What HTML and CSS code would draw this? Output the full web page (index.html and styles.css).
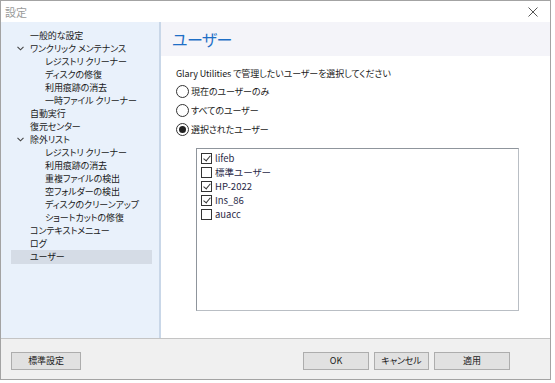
FILE: index.html
```html
<!DOCTYPE html>
<html lang="ja">
<head>
<meta charset="utf-8">
<link rel="stylesheet" href="styles.css">
</head>
<body>
<div class="window">
  <div class="titlebar">
    <span class="title">設定</span>
    <svg class="close" width="10" height="10" viewBox="0 0 10 10"><path d="M0.5 0.5L9.5 9.5M9.5 0.5L0.5 9.5" stroke="#555" stroke-width="1" fill="none"/></svg>
  </div>
  <div class="main">
    <nav class="sidebar">
      <div class="item top">一般的な設定</div>
      <div class="item top"><svg class="chev" width="7" height="5" viewBox="0 0 7 5"><path d="M0.5 0.8L3.5 3.8L6.5 0.8" stroke="#444" stroke-width="1.1" fill="none"/></svg>ワンクリック メンテナンス</div>
      <div class="item sub">レジストリ クリーナー</div>
      <div class="item sub">ディスクの修復</div>
      <div class="item sub">利用痕跡の消去</div>
      <div class="item sub">一時ファイル クリーナー</div>
      <div class="item top">自動実行</div>
      <div class="item top">復元センター</div>
      <div class="item top"><svg class="chev" width="7" height="5" viewBox="0 0 7 5"><path d="M0.5 0.8L3.5 3.8L6.5 0.8" stroke="#444" stroke-width="1.1" fill="none"/></svg>除外リスト</div>
      <div class="item sub">レジストリ クリーナー</div>
      <div class="item sub">利用痕跡の消去</div>
      <div class="item sub">重複ファイルの検出</div>
      <div class="item sub">空フォルダーの検出</div>
      <div class="item sub">ディスクのクリーンアップ</div>
      <div class="item sub">ショートカットの修復</div>
      <div class="item top">コンテキストメニュー</div>
      <div class="item top">ログ</div>
      <div class="item top selected">ユーザー</div>
    </nav>
    <section class="content">
      <header class="header"><h1>ユーザー</h1></header>
      <div class="body">
        <p class="intro">Glary Utilities で管理したいユーザーを選択してください</p>
        <div class="radio"><span class="circle"></span>現在のユーザーのみ</div>
        <div class="radio"><span class="circle"></span>すべてのユーザー</div>
        <div class="radio"><span class="circle on"></span>選択されたユーザー</div>
        <div class="listbox">
          <div class="check"><span class="box on"></span><span class="uname">lifeb</span></div>
          <div class="check"><span class="box"></span><span class="uname">標準ユーザー</span></div>
          <div class="check"><span class="box on"></span><span class="uname">HP-2022</span></div>
          <div class="check"><span class="box on"></span><span class="uname">Ins_86</span></div>
          <div class="check"><span class="box"></span><span class="uname">auacc</span></div>
        </div>
      </div>
    </section>
  </div>
  <footer class="footer">
    <button class="btn wide">標準設定</button>
    <div class="right">
      <button class="btn ok">OK</button>
      <button class="btn cancel">キャンセル</button>
      <button class="btn apply">適用</button>
    </div>
  </footer>
</div>
</body>
</html>
```

FILE: styles.css
```css
* { box-sizing: border-box; }
html, body { margin: 0; padding: 0; background: #ffffff; }
body {
  font-family: "Noto Sans CJK JP", "Noto Sans", sans-serif;
  font-feature-settings: "palt";
  color: #1a1a1a;
  font-size: 9px;
  letter-spacing: -0.1px;
}
.window {
  width: 551px;
  height: 380px;
  border: 1px solid #a3a3a3;
  display: flex;
  flex-direction: column;
  background: #fff;
}
.titlebar {
  height: 21px;
  display: flex;
  align-items: center;
  justify-content: space-between;
  padding: 0 8px 0 4px;
  background: #fff;
}
.title { color: #9a9a9a; font-size: 11px; letter-spacing: 0; }
.close { margin-right: 4px; }
.main {
  flex: 1;
  display: flex;
  min-height: 0;
}
.sidebar {
  width: 160px;
  background: #e9f1fb;
  border-right: 2px solid #c9d7e8;
  padding: 7px 7px 0 10px;
}
.item {
  height: 13px;
  line-height: 13px;
  position: relative;
  white-space: nowrap;
}
.item.top { padding-left: 19px; }
.item.sub { padding-left: 34px; }
.chev { position: absolute; left: 6px; top: 4px; }
.item.selected { background: #d5dce6; height: 14px; }
.content {
  flex: 1;
  background: #fff;
  display: flex;
  flex-direction: column;
}
.header {
  height: 34px;
  background: #f4f4f9;
  display: flex;
  align-items: center;
  padding-left: 11px;
}
.header h1 {
  margin: 0;
  font-weight: normal;
  font-size: 16px;
  color: #1f6fc6;
  letter-spacing: -0.6px;
}
.body { padding: 11px 0 0 15px; }
.intro { margin: 0 0 1px 0; line-height: 14px; }
.radio {
  display: flex;
  align-items: center;
  height: 19px;
}
.circle {
  width: 13px;
  height: 13px;
  border: 1px solid #333;
  border-radius: 50%;
  margin-right: 2px;
  display: flex;
  align-items: center;
  justify-content: center;
  background: #fff;
}
.circle.on::after {
  content: "";
  width: 7px;
  height: 7px;
  border-radius: 50%;
  background: #222;
}
.listbox {
  margin: 9px 0 0 20px;
  width: 323px;
  height: 163px;
  border: 1px solid #8f959c;
  border-right-color: #b9bec4;
  border-bottom-color: #b9bec4;
  padding: 2px 0 0 4px;
  background: #fff;
}
.check {
  display: flex;
  align-items: center;
  height: 14px;
}
.box {
  width: 11px;
  height: 11px;
  border: 1px solid #333;
  margin-right: 3px;
  position: relative;
  background: #fff;
}
.box.on::after {
  content: "";
  position: absolute;
  left: 3px;
  top: 0px;
  width: 3px;
  height: 6px;
  border: solid #333;
  border-width: 0 1px 1px 0;
  transform: rotate(40deg);
}
.uname { color: #2a2a48; letter-spacing: 0; font-size: 9.5px; }
.footer {
  height: 41px;
  border-top: 1px solid #c4c4c4;
  background: #f0f0f0;
  display: flex;
  align-items: flex-start;
  justify-content: space-between;
  padding: 13px 40px 0 10px;
}
.right { display: flex; gap: 5px; }
.btn {
  font-family: inherit;
  font-feature-settings: "palt";
  letter-spacing: -0.1px;
  font-size: 9px;
  color: #1a1a1a;
  height: 18px;
  padding: 0;
  background: #e1e1e1;
  border: 1px solid #adadad;
  border-radius: 0;
  line-height: 16px;
}
.btn.wide { width: 70px; }
.btn.ok { width: 66px; }
.btn.cancel { width: 55px; }
.btn.apply { width: 76px; }
```
